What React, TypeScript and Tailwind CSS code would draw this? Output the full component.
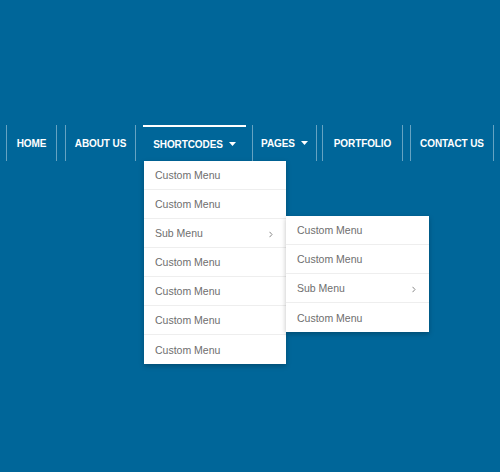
const navItems = [
  { label: "HOME", box: "ml-[6px] w-[51px] border-x border-white/40" },
  { label: "ABOUT US", box: "ml-[8px] w-[71px] border-x border-white/40" },
  { label: "SHORTCODES", box: "ml-[7px] w-[103px] border-t-2 border-white", caret: true, active: true },
  { label: "PAGES", box: "ml-[6px] w-[65px] border-x border-white/40", caret: true },
  { label: "PORTFOLIO", box: "ml-[5px] w-[81px] border-x border-white/40" },
  { label: "CONTACT US", box: "ml-[7px] w-[84px] border-x border-white/40" },
];

function Caret() {
  return (
    <svg width="7" height="4" viewBox="0 0 7 4" className="ml-[6px]">
      <path d="M0 0h7L3.5 4z" fill="#fff" />
    </svg>
  );
}

function MenuItem({ label, sub, last }: { label: string; sub?: boolean; last?: boolean }) {
  return (
    <div
      className={`flex h-[29px] items-center justify-between pl-[11px] pr-[11px] pt-[2px] text-[10.5px] font-normal tracking-normal text-[#6e6e6e] ${
        last ? "" : "border-b border-[#eee]"
      }`}
    >
      <span>{label}</span>
      {sub && (
        <svg width="4" height="7" viewBox="0 0 4 7" className="mr-[2px]">
          <path d="M0.5 0.8L3 3.5L0.5 6.2" fill="none" stroke="#888" strokeWidth="1" />
        </svg>
      )}
    </div>
  );
}

function SubSubMenu() {
  return (
    <div className="absolute left-full top-[-3px] w-[143px] bg-white shadow-[0_2px_5px_rgba(0,0,0,0.25)]">
      <MenuItem label="Custom Menu" />
      <MenuItem label="Custom Menu" />
      <MenuItem label="Sub Menu" sub />
      <MenuItem label="Custom Menu" last />
    </div>
  );
}

function Dropdown() {
  return (
    <div className="absolute left-px top-full z-10 w-[142px] bg-white shadow-[0_2px_5px_rgba(0,0,0,0.25)]">
      <MenuItem label="Custom Menu" />
      <MenuItem label="Custom Menu" />
      <div className="relative">
        <MenuItem label="Sub Menu" sub />
        <SubSubMenu />
      </div>
      <MenuItem label="Custom Menu" />
      <MenuItem label="Custom Menu" />
      <MenuItem label="Custom Menu" />
      <MenuItem label="Custom Menu" last />
    </div>
  );
}

export default function App() {
  return (
    <div
      className="h-[472px] w-[500px] bg-[#006699] pt-[125px]"
      style={{ fontFamily: '"Liberation Sans", Arial, sans-serif' }}
    >
      <nav className="flex">
        {navItems.map((item) => (
          <div
            key={item.label}
            className={`relative flex h-[36px] shrink-0 items-center justify-center text-[10px] font-bold tracking-[-0.1px] text-white ${item.box}`}
          >
            <span className="flex items-center">
              {item.label}
              {item.caret && <Caret />}
            </span>
            {item.active && <Dropdown />}
          </div>
        ))}
      </nav>
    </div>
  );
}
